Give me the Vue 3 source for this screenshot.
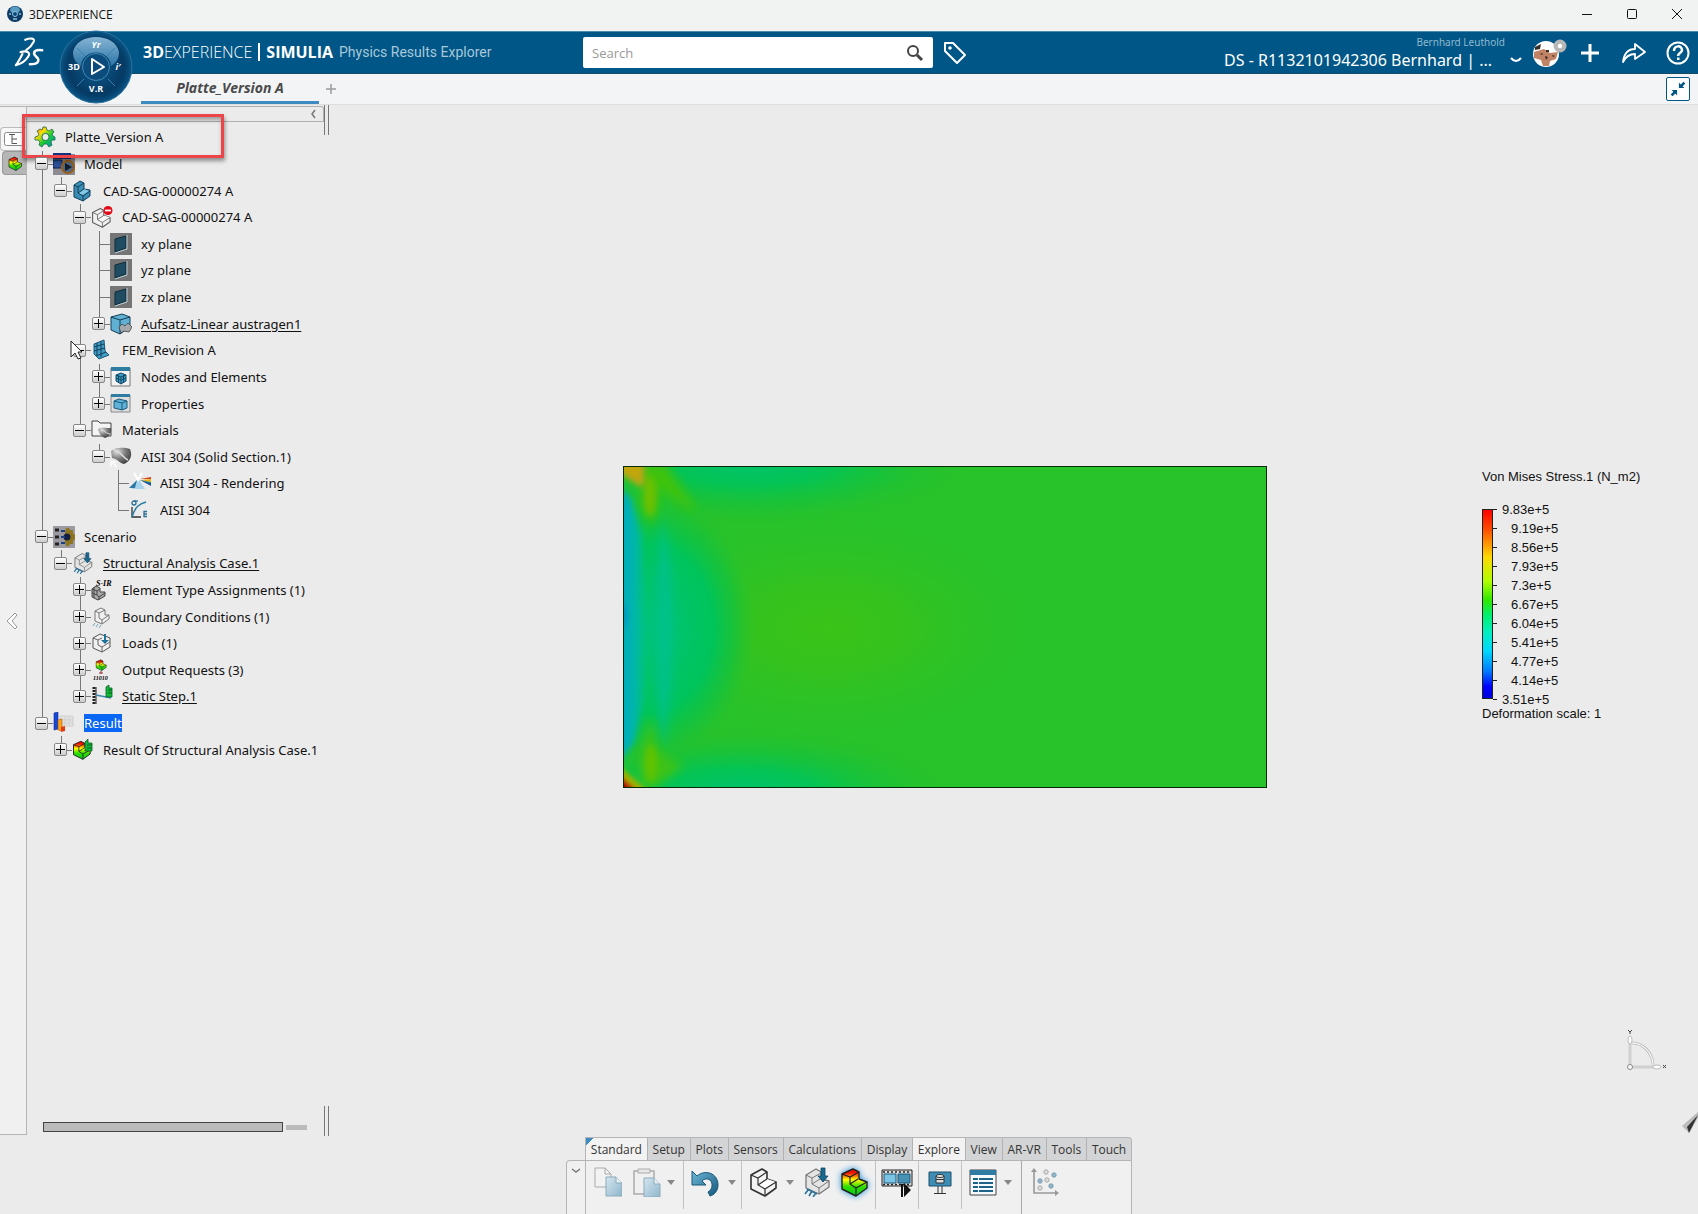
<script setup>
import { ref } from 'vue'

const search = ref('')

const source = [
  [0, 'Model', 'model', '-'],
  [1, 'CAD-SAG-00000274 A', 'product', '-'],
  [2, 'CAD-SAG-00000274 A', 'hidden-part', '-'],
  [3, 'xy plane', 'plane', ''],
  [3, 'yz plane', 'plane', ''],
  [3, 'zx plane', 'plane', ''],
  [3, 'Aufsatz-Linear austragen1', 'body', '+', 'link'],
  [2, 'FEM_Revision A', 'fem', '-'],
  [3, 'Nodes and Elements', 'nodes', '+'],
  [3, 'Properties', 'props', '+'],
  [2, 'Materials', 'materials', '-'],
  [3, 'AISI 304 (Solid Section.1)', 'material', '-'],
  [4, 'AISI 304 - Rendering', 'rendering', ''],
  [4, 'AISI 304', 'curve', ''],
  [0, 'Scenario', 'scenario', '-'],
  [1, 'Structural Analysis Case.1', 'case', '-', 'link'],
  [2, 'Element Type Assignments (1)', 'element', '+'],
  [2, 'Boundary Conditions (1)', 'boundary', '+'],
  [2, 'Loads (1)', 'load', '+'],
  [2, 'Output Requests (3)', 'output', '+'],
  [2, 'Static Step.1', 'step', '+', 'link'],
  [0, 'Result', 'result', '-', 'selected'],
  [1, 'Result Of Structural Analysis Case.1', 'contour-ok', '+'],
]

// Small captions that are part of a tree icon.
const captions = {
  element: { text: 'S-IR', x: 5, y: 7, size: 8 },
  output: { text: '11010', x: 2, y: 21, size: 6 },
}

// A guide line runs on when a sibling at that depth still follows.
const continues = (index, depth) => {
  for (const [level] of source.slice(index + 1)) {
    if (level < depth) return false
    if (level === depth) return true
  }
  return false
}

const rows = source.map(([level, label, icon, toggle, kind], i) => ({
  label, icon, toggle, kind,
  caption: captions[icon],
  guides: Array.from({ length: level }, (_, d) => continues(i, d)),
  last: !continues(i, level),
}))

const legend = ['9.83e+5', '9.19e+5', '8.56e+5', '7.93e+5', '7.3e+5', '6.67e+5', '6.04e+5', '5.41e+5', '4.77e+5', '4.14e+5', '3.51e+5']

const tabs = ['Standard', 'Setup', 'Plots', 'Sensors', 'Calculations', 'Display', 'Explore', 'View', 'AR-VR', 'Tools', 'Touch']
</script>

<template>
  <div class="app">
    <svg class="sprite" width="0" height="0" aria-hidden="true">
      <defs>
        <linearGradient id="rainbow" x1="0" y1="0" x2="0" y2="1">
          <stop offset="0" stop-color="#f00" /><stop offset=".15" stop-color="#f21500" /><stop offset=".4" stop-color="#ff0" />
          <stop offset=".65" stop-color="#3d0" /><stop offset="1" stop-color="#0c2" />
        </linearGradient>
        <linearGradient id="paper" x1="0" y1="0" x2="1" y2="1">
          <stop offset="0" stop-color="#d5e6ef" /><stop offset="1" stop-color="#8fb6cc" />
        </linearGradient>
        <linearGradient id="steel" x1="0" y1="0" x2="1" y2="1">
          <stop offset="0" stop-color="#6fb7d8" /><stop offset="1" stop-color="#12587e" />
        </linearGradient>
        <linearGradient id="gearfill" x1="0" y1="0" x2="1" y2="1">
          <stop offset="0" stop-color="#f60" /><stop offset=".3" stop-color="#fd0" /><stop offset=".6" stop-color="#1c3" /><stop offset="1" stop-color="#08c" />
        </linearGradient>
        <radialGradient id="metal" cx=".3" cy=".25" r=".9">
          <stop offset="0" stop-color="#ddd" /><stop offset=".5" stop-color="#777" /><stop offset="1" stop-color="#333" />
        </radialGradient>
      </defs>
      <symbol id="part-shape" viewBox="0 0 28 30">
        <path d="M2 8L13 2L18 5V12L27 15V21L16 29L2 22Z" fill="#f4f4f4" stroke="#333" stroke-linejoin="round" stroke-width="1.6" />
        <path d="M9 19L18 12L27 15L16 22Z" fill="#fff" />
        <path d="M2 8L9 11L18 5M9 11V18L16 22L27 15M16 22V29M9 18L18 12" fill="none" stroke="#333" stroke-width="1.2" />
      </symbol>
      <symbol id="contour-shape" viewBox="0 0 28 30">
        <path d="M2 7L13 2L19 5V12L27 15V21L16 29L2 22Z" fill="url(#rainbow)" stroke="#222" stroke-width="1.4" stroke-linejoin="round" />
        <path d="M2 7L10 10L19 5M10 10V17L16 21L27 15M16 21V29M10 17L18 12" fill="none" stroke="#222" stroke-width="1.2" />
      </symbol>
      <symbol id="gear" viewBox="0 0 22 22">
        <path d="M9 1H12L13 4L15 5L18 3L20 6L18 8L19 10L21 11V14L18 14L17 16L18 19L15 21L13 18H10L8 21L5 19L6 16L4 14H1V11L4 10L5 8L3 5L6 3L8 4Z" fill="url(#gearfill)" stroke="#265" stroke-width=".8" />
        <circle cx="11.500" cy="11" r="3.600" fill="#ebebeb" stroke="#275" />
      </symbol>
      <symbol id="model" viewBox="0 0 22 22">
        <path d="M0 1H22V22H0Z" fill="#8b8b91" /><path d="M0 0H18V6H0Z" fill="#16327c" /><path d="M0 7H9V15H0Z" fill="#2c4f96" stroke="#0b1e4c" />
        <circle cx="15" cy="14" r="6.200" fill="#53667f" stroke="#9b6018" stroke-width="2" /><path d="M12 10L19 14L12 18Z" fill="#101b2d" />
      </symbol>
      <symbol id="product" viewBox="0 0 22 22">
        <path d="M2 5L8 1L12 3V9L18 10V16L11 21L2 17Z" fill="#3a8db5" stroke="#123f59" /><path d="M6 13L12 9L17 11L11 15Z" fill="#83c8e4" />
        <path d="M2 5L6 7L12 3M6 7V13L11 16L18 11M11 16V21M6 13L12 9" fill="none" stroke="#123f59" />
      </symbol>
      <symbol id="hidden-part" viewBox="0 0 22 22">
        <g opacity=".75"><use href="#part-shape" x="0" y="1" width="20" height="21" /></g><circle cx="17" cy="4.500" r="4.500" fill="#e00a18" /><path d="M14 4.500H20" stroke="#fff" stroke-width="1.800" />
      </symbol>
      <symbol id="plane" viewBox="0 0 22 22">
        <path d="M0 0H22V22H0Z" fill="#757575" /><path d="M5 6L16 3V15L5 19Z" fill="#1f4c61" stroke="#0e2b39" /><path d="M17 2V16L5 20" fill="none" stroke="#b9cdd6" />
      </symbol>
      <symbol id="body" viewBox="0 0 22 22">
        <path d="M1 4L12 1L20 4V14L10 21L1 17Z" fill="#5fb0d3" stroke="#123f59" /><path d="M1 4L10 7L20 4M10 7V21" fill="none" stroke="#123f59" />
        <path d="M9 14l3-3 3 2 3-3 4 4-3 5-5-1-3 2z" fill="#a3a9ad" stroke="#444" stroke-width=".8" />
      </symbol>
      <symbol id="fem" viewBox="0 0 22 22">
        <path d="M3 5L13 1L14 12L18 16L8 20L3 15Z" fill="#3f9cc4" stroke="#1b5878" /><path d="M6 4V16M10 2V18M3 8L13 5M3 12L14 9M5 17L15 13" stroke="#123f59" fill="none" />
      </symbol>
      <symbol id="nodes" viewBox="0 0 22 22">
        <path d="M1 2H20V20H1Z" fill="#f3f3f3" stroke="#777" /><path d="M1 1H20V5H1Z" fill="#2f7ca3" />
        <path d="M6 9L11 7L16 9V15L11 18L6 15Z" fill="#3d9cc6" stroke="#124761" /><path d="M6 12L11 14L16 12M6 9L11 11L16 9M11 11V18M8.500 9V17M13.500 9V17" fill="none" stroke="#124761" />
      </symbol>
      <symbol id="props" viewBox="0 0 22 22">
        <path d="M1 2H20V19H1Z" fill="#ddd" stroke="#888" /><path d="M1 1H20V4H1Z" fill="#2f7ca3" />
        <path d="M4 8L9 6L17 8V15L12 17L4 15Z" fill="#5fb2d6" stroke="#1b5c7e" /><path d="M4 8L12 10L17 8M12 10V17" fill="none" stroke="#1b5c7e" />
      </symbol>
      <symbol id="materials" viewBox="0 0 22 22">
        <path d="M1 17V2H7L9 4H20V17Z" fill="#f4f4f4" stroke="#444" /><path d="M7 10C10 8 16 9 20 9C21 14 18 18 14 19C9 17 8 13 7 10Z" fill="url(#metal)" /><path d="M8 9C12 9 13 14 19 15" stroke="#ddd" fill="none" />
      </symbol>
      <symbol id="material" viewBox="0 0 22 22">
        <path d="M1 5C5 1 14 1 20 3C23 10 20 15 14 18C9 17 8 13 2 12Z" fill="url(#metal)" /><path d="M3 4C10 4 12 11 18 14" stroke="#ddd" stroke-width="1.500" fill="none" />
        <path d="M1 21V16H6M2 16L7 21" fill="none" stroke="#fff" stroke-width="1.300" />
      </symbol>
      <symbol id="rendering" viewBox="0 0 22 22">
        <path d="M9 6L3 17H16Z" fill="#a9d5ec" /><path d="M8 8L0 16H6Z" fill="#2d79a5" /><path d="M5 1L9 8L13 1" fill="none" stroke="#fff" stroke-width="2" />
        <path d="M11 7L22 5V7Z" fill="#d6431d" /><path d="M11 8L22 7V10Z" fill="#ecb417" /><path d="M11 8L22 10V12Z" fill="#35a05b" /><path d="M11 8L22 11V14Z" fill="#1c52a8" />
      </symbol>
      <symbol id="curve" viewBox="0 0 22 22">
        <path d="M3 8V18H12" stroke="#333" fill="none" stroke-width="1.300" /><path d="M3 18C6 8 10 5 17 3" stroke="#2a7ba4" fill="none" stroke-width="1.500" />
        <circle cx="5" cy="4" r="2" fill="none" stroke="#2a6f95" stroke-width="1.300" /><path d="M5 2H9" stroke="#2a6f95" stroke-width="1.300" />
        <path d="M18 12.500h-3v5h3M15 15h3" fill="none" stroke="#2a6f95" stroke-width="1.300" />
      </symbol>
      <symbol id="scenario" viewBox="0 0 22 22">
        <path d="M0 0H22V22H0Z" fill="#9a9aa0" /><path d="M13 2h3l1 2 3 0 0 3 2 2v4l-2 2 0 3h-3l-1 2h-3l-1-4V6z" fill="#8d7420" /><circle cx="14" cy="11" r="3.500" fill="#14203f" />
        <path d="M2 4H6M2 11H6M2 18H6" stroke="#222" stroke-width="3" /><path d="M8 5H12M8 11H12M8 17H12" stroke="#1c3d8a" stroke-width="1.800" />
      </symbol>
      <symbol id="case" viewBox="0 0 28 30">
        <path d="M3 8L13 2L18 5V12L26 14V20L16 27L3 21Z" fill="#e4e4e4" stroke="#777" stroke-width="1.300" stroke-linejoin="round" /><path d="M3 8L9 11L18 6M9 11V17L16 21L26 14M16 21V27M9 17L17 12" fill="none" stroke="#777" />
        <path d="M18 1H22V9H25L20 15L15 9H18Z" fill="#17688f" stroke="#0d4664" stroke-width=".8" /><path d="M5 23L2 27M9 24L6 29M13 26L10 30M4 22L14 27" stroke="#2a7299" stroke-width="1.600" />
      </symbol>
      <symbol id="element" viewBox="0 0 22 22">
        <path d="M1 10L5 7L9 9V13L14 13V17L7 21L1 18Z" fill="#aaa" stroke="#444" /><path d="M1 10L6 12L9 10M6 12V16L8 18L14 14M8 18V21M3 8V19M1 14L6 16" fill="none" stroke="#444" />
      </symbol>
      <symbol id="boundary" viewBox="0 0 22 22">
        <path d="M4 5L10 2L14 4V9L18 9V13L11 18L4 15Z" fill="#f0f0f0" stroke="#777" /><path d="M4 5L8 7L14 4M8 7V12L11 14L18 9M11 14V18" fill="none" stroke="#777" /><path d="M4 17L2 20M7 18L5 21M10 19L8 22" stroke="#76a3bd" />
      </symbol>
      <symbol id="load" viewBox="0 0 22 22">
        <path d="M2 6L9 2L19 6V15L11 20L2 16Z" fill="#f0f0f0" stroke="#555" /><path d="M2 6L7 8L11 6M7 8V13L11 15L19 10M11 15V20" fill="none" stroke="#666" /><path d="M13 2H15V8H18L14 12L10 8H13Z" fill="#1d7299" />
      </symbol>
      <symbol id="output" viewBox="0 0 22 22">
        <use href="#contour-shape" x="4" y="0" width="12" height="12" /><path d="M10 12V15M8 14H12" stroke="#933" />
      </symbol>
      <symbol id="step" viewBox="0 0 22 22">
        <path d="M3 2V19" stroke="#222" stroke-width="3" stroke-dasharray="2 1" /><path d="M5 2V19" stroke="#222" /><path d="M5 10L20 13" stroke="#3a88ad" stroke-width="1.500" />
        <path d="M15 12V2L18 0V3H21V12Z" fill="#12b83c" stroke="#075d1c" stroke-width=".8" /><path d="M17 5H21M17 8H21" stroke="#075d1c" />
      </symbol>
      <symbol id="result" viewBox="0 0 22 22">
        <path d="M7 4H20V14H7Z" fill="#e2e2e2" stroke="#cfcfcf" /><path d="M7 8H20M7 11H20M12 4V14M16 4V14" stroke="#cfcfcf" />
        <path d="M1 1L5 0V17L1 18Z" fill="#1848d8" stroke="#0a2a94" stroke-width=".6" /><path d="M5 8L9 7V19L5 18Z" fill="#f6a21c" stroke="#b85a06" stroke-width=".6" /><path d="M8 15L12 14V19L8 20Z" fill="#e33a14" />
      </symbol>
      <symbol id="contour-ok" viewBox="0 0 22 22">
        <use href="#contour-shape" x="0" y="1" width="19" height="20" /><path d="M13 12V3L16 0V4H20V12Z" fill="#12b83c" stroke="#075d1c" stroke-width=".8" /><path d="M15 6H20M15 9H20" stroke="#075d1c" />
      </symbol>
    </svg>

    <div class="titlebar">
      <svg class="app-icon" viewBox="0 0 16 16"><circle cx="8" cy="8" r="8" fill="#0c3c66" /><ellipse cx="8" cy="4" rx="5" ry="3.500" fill="#5a9cc4" /><circle cx="8" cy="8" r="2.500" fill="#0d4a78" stroke="#8dc3e4" /><path d="M2 8H4M12 8H14M6 13H10" stroke="#dff" /></svg>
      <span class="app-name">3DEXPERIENCE</span>
      <div class="window-buttons">
        <button aria-label="Minimize"><svg viewBox="0 0 12 12"><path d="M1 6.500H11" /></svg></button>
        <button aria-label="Maximize"><svg viewBox="0 0 12 12"><rect x="1.500" y="1.500" width="9" height="9" rx="1" /></svg></button>
        <button aria-label="Close"><svg viewBox="0 0 12 12"><path d="M1 1L11 11M11 1L1 11" /></svg></button>
      </div>
    </div>

    <header class="topbar">
      <svg class="ds-logo" viewBox="0 0 32 34"><g fill="none" stroke="#fff" stroke-linecap="round" stroke-linejoin="round"><path d="M12 3C17 1 23 1 21 5C19 9 16 12 13 14" stroke-width="2.200" /><path d="M7 16C15 14 18 17 15 21C12 26 6 29 2 30C5 26 7 22 9 18" stroke-width="2.300" /><path d="M30 14C24 13 20 15 22 19C24 22 28 23 25 27C23 29 19 29 17 29" stroke-width="2.700" /></g></svg>
      <button class="compass" aria-label="Compass">
        <svg viewBox="0 0 74 74">
          <defs>
            <radialGradient id="dial"><stop offset="0" stop-color="#0d5c92" /><stop offset=".75" stop-color="#063a63" /><stop offset=".85" stop-color="#06426e" /><stop offset="1" stop-color="#0a5788" /></radialGradient>
            <linearGradient id="gloss" x1="0" y1="0" x2="0" y2="1"><stop offset="0" stop-color="#86b4d3" /><stop offset="1" stop-color="#2c76a8" /></linearGradient>
          </defs>
          <circle cx="37" cy="37" r="36" fill="url(#dial)" stroke="#2b709c" />
          <path d="M14 22C18 2 56 2 60 22C60 29 57 33 52 36C51 18 23 18 22 36C17 33 14 29 14 22Z" fill="url(#gloss)" />
          <circle cx="37" cy="37" r="13.500" fill="#0c4c7c" stroke="#4389b5" />
          <path d="M18 18L26 26M56 18L48 26M18 56L25 49M56 56L49 49" stroke="#3a80ad" />
          <path d="M33 29L45 37L33 44Z" fill="none" stroke="#fff" stroke-width="2" stroke-linejoin="round" />
          <g fill="#fff" font-family="Open Sans, sans-serif" font-weight="700" font-size="9" text-anchor="middle"><text x="37" y="18" font-style="italic">Yr</text><text x="15" y="40">3D</text><text x="59" y="40" font-style="italic">i′</text><text x="37" y="62">V.R</text></g>
        </svg>
      </button>
      <h1 class="brand"><b>3D</b><span>EXPERIENCE</span><i></i><b>SIMULIA</b><em>Physics Results Explorer</em></h1>
      <form class="search" @submit.prevent>
        <input v-model="search" type="text" placeholder="Search" aria-label="Search">
        <button aria-label="Start search"><svg viewBox="0 0 18 18"><circle cx="7" cy="7" r="5" /><path d="M11 11L16 16" stroke-width="3" /></svg></button>
      </form>
      <button class="tag" aria-label="Tags"><svg viewBox="0 0 24 24"><path d="M2 2H10L22 14L14 22L2 10Z" fill="none" stroke="#fff" stroke-width="2" stroke-linejoin="round" /><circle cx="7" cy="7" r="1.800" fill="#fff" /></svg></button>
      <div class="account">
        <div class="who"><small>Bernhard Leuthold</small><span>DS - R1132101942306 Bernhard | ...</span></div>
        <button class="drop" aria-label="Change context"><svg viewBox="0 0 12 6"><path d="M1 1Q6 7 11 1" fill="none" stroke="#fff" stroke-width="2" /></svg></button>
        <button class="avatar" aria-label="Profile">
          <svg viewBox="0 0 36 30"><circle cx="14" cy="16" r="13" fill="#fff" /><path d="M2 14L12 11L18 15L26 14L24 21L18 23L17 28H11L9 22L2 20Z" fill="#c08366" /><path d="M3 9L9 6L8 11L3 12ZM14 12h3v2h-3zM8 16l2-1 1 2zM13 18l3 1-2 3zM20 17l3 1-2 1z" fill="#3a2a24" /><circle cx="28" cy="8" r="6.500" fill="#b7b7b7" /><circle cx="28" cy="8" r="2.200" fill="#fff" /></svg>
        </button>
        <button class="tool" aria-label="Add"><svg viewBox="0 0 24 24"><path d="M12 3V21M3 12H21" fill="none" stroke="#fff" stroke-width="3" /></svg></button>
        <button class="tool" aria-label="Share"><svg viewBox="0 0 24 24"><path d="M1 21C2 13 6 8 13 8V3L23 11L13 18V13C8 13 4 15 1 21Z" fill="none" stroke="#fff" stroke-width="1.800" stroke-linejoin="round" /></svg></button>
        <button class="tool" aria-label="Help"><svg viewBox="0 0 24 24"><circle cx="12" cy="12" r="10.500" fill="none" stroke="#fff" stroke-width="2" /><path d="M8 10C8 4 16 4 16 9C16 12 12 12 12 15" fill="none" stroke="#fff" stroke-width="2.500" /><path d="M11 16.500H13.500V19H11Z" fill="#fff" /></svg></button>
      </div>
    </header>

    <nav class="tabstrip">
      <a href="#" class="doc-tab">Platte_Version A</a>
      <button class="new-tab" aria-label="New tab"><svg viewBox="0 0 12 12"><path d="M6 1V11M1 6H11" stroke="#999" stroke-width="1.500" /></svg></button>
      <button class="shrink" aria-label="Exit full view"><svg viewBox="0 0 24 24"><path d="M13 11V5L15 7L18 4L20 6L17 9L19 11Z M11 13V19L9 17L6 20L4 18L7 15L5 13Z" fill="#005686" /></svg></button>
    </nav>

    <main class="work">
      <aside class="rail">
        <button class="rail-tab open" aria-label="Tree"><svg viewBox="0 0 20 16"><rect x=".5" y="1.500" width="19" height="13" rx="2" fill="#fff" stroke="#888" /><path d="M5 3.500H11M8 3.500V12.500H13M8 8H13" fill="none" stroke="#555" /></svg></button>
        <button class="rail-tab" aria-label="Results"><svg viewBox="0 0 28 30"><use href="#contour-shape" /></svg></button>
        <button class="rail-fold" aria-label="Collapse"><svg viewBox="0 0 12 18"><path d="M9 1L1 9L9 17L11 15L6 9L11 3Z" fill="#fff" stroke="#999" /></svg></button>
      </aside>

      <section class="panel">
        <div class="panel-head"><button aria-label="Hide panel"><svg viewBox="0 0 6 10"><path d="M5 1L2 5L5 9" fill="none" stroke="#777" stroke-width="1.500" /></svg></button></div>
        <ul class="tree">
          <li class="row root"><svg class="icon"><use href="#gear" /></svg><span class="label">Platte_Version A</span></li>
          <li v-for="(row, i) in rows" :key="i" class="row">
            <span v-for="(on, d) in row.guides" :key="d" class="cell" :class="{ guide: on }"></span>
            <span class="cell own" :class="{ last: row.last }"><button v-if="row.toggle" class="toggle" :class="{ plus: row.toggle === '+' }" :aria-label="'Toggle ' + row.label"></button></span>
            <svg class="icon"><use :href="'#' + row.icon" /><text v-if="row.caption" class="caption" :x="row.caption.x" :y="row.caption.y" :font-size="row.caption.size">{{ row.caption.text }}</text></svg>
            <span class="label" :class="row.kind">{{ row.label }}</span>
          </li>
        </ul>
        <div class="callout"></div>
        <svg class="cursor" viewBox="0 0 13 20"><path d="M1 1V17L5 13L8 19L11 18L8 12H12Z" fill="#fff" stroke="#222" /></svg>
        <div class="scroll"><div class="thumb"></div><div class="stub"></div></div>
      </section>
      <div class="splitter"><i></i><i></i></div>

      <section class="viewport">
        <svg class="plot" viewBox="0 0 644 322" preserveAspectRatio="none">
          <defs>
            <radialGradient id="warm"><stop offset="0" stop-color="#3ac318" /><stop offset=".35" stop-color="#35c21e" /><stop offset="1" stop-color="#28c22a" stop-opacity="0" /></radialGradient>
            <radialGradient id="cool"><stop offset="0" stop-color="#00c36c" /><stop offset=".35" stop-color="#00c45a" stop-opacity=".9" /><stop offset=".65" stop-color="#14c23e" stop-opacity=".6" /><stop offset="1" stop-color="#28c22a" stop-opacity="0" /></radialGradient>
            <radialGradient id="lobe"><stop offset="0" stop-color="#00c37c" /><stop offset=".6" stop-color="#00c45a" /><stop offset=".8" stop-color="#12c240" stop-opacity=".7" /><stop offset="1" stop-color="#28c22a" stop-opacity="0" /></radialGradient>
            <linearGradient id="edge" x1="0" y1="0" x2="1" y2="0"><stop offset="0" stop-color="#00a4c6" /><stop offset=".6" stop-color="#00b2b4" /><stop offset="1" stop-color="#00c284" /></linearGradient>
            <filter id="faint" x="-50%" y="-50%" width="200%" height="200%"><feGaussianBlur stdDeviation="2" /></filter>
            <filter id="soft" x="-50%" y="-50%" width="200%" height="200%"><feGaussianBlur stdDeviation="3" /></filter>
            <filter id="softer" x="-50%" y="-50%" width="200%" height="200%"><feGaussianBlur stdDeviation="5" /></filter>
            <clipPath id="sheet"><rect width="644" height="322" /></clipPath>
          </defs>
          <g clip-path="url(#sheet)">
            <rect width="644" height="322" fill="#28c22a" />
            <ellipse cx="205" cy="162" rx="220" ry="120" fill="url(#warm)" />
            <ellipse cx="125" cy="-4" rx="230" ry="66" fill="url(#cool)" />
            <ellipse cx="115" cy="326" rx="220" ry="66" fill="url(#cool)" />
            <ellipse cx="26" cy="162" rx="108" ry="142" fill="url(#lobe)" />
            <path d="M40 50L48 110L50 162L48 220L40 285L34 220L34 110Z" fill="#00c189" filter="url(#softer)" />
            <path d="M-12 14L8 32L19 70L21 160L20 235L12 275L-12 308Z" fill="url(#edge)" filter="url(#soft)" />
            <path d="M20 -4H42L74 44L60 40L36 24L30 60L24 50L20 30Z" fill="#3cc210" filter="url(#softer)" />
            <ellipse cx="27" cy="30" rx="6" ry="20" fill="#70c000" filter="url(#soft)" />
            <path d="M-8 -8H22L21 21L14 19L-8 4Z" fill="#c2a60a" filter="url(#soft)" />
            <path d="M28 250L34 285L60 300L30 322H18L18 290Z" fill="#3cc214" filter="url(#softer)" />
            <ellipse cx="28" cy="297" rx="6" ry="18" fill="#62c200" filter="url(#soft)" />
            <path d="M-6 298L26 326H-6Z" fill="#9cb400" filter="url(#faint)" />
            <path d="M-6 306L16 326H-6Z" fill="#b86a00" filter="url(#faint)" />
            <path d="M-6 310L11 326H-6Z" fill="#a80000" filter="url(#faint)" />
            <ellipse cx="0" cy="150" rx="3" ry="12" fill="#0090c4" filter="url(#soft)" />
          </g>
          <rect x=".5" y=".5" width="643" height="321" fill="none" stroke="#062a06" />
        </svg>
        <div class="legend">
          <p>Von Mises Stress.1 (N_m2)</p>
          <div class="scale"><div class="bar"></div><ol><li v-for="v in legend" :key="v">{{ v }}</li></ol></div>
          <p class="foot">Deformation scale: 1</p>
        </div>
        <svg class="triad" viewBox="0 0 44 44"><path d="M8 10V38H34" fill="none" stroke="#d0d0d0" stroke-width="3" /><path d="M10 14C22 14 31 25 31 36" fill="none" stroke="#c4c4c4" stroke-width="3" /><path d="M10 14C22 14 31 25 31 36" fill="none" stroke="#fff" /><ellipse cx="8" cy="11" rx="2" ry="4" fill="#fff" stroke="#bbb" /><ellipse cx="35" cy="38" rx="4" ry="2" fill="#fff" stroke="#bbb" /><circle cx="8" cy="38" r="2.500" fill="#fff" stroke="#888" /><path d="M6 1L8 3L10 1M8 3V5M41 36l3 3M44 36l-3 3" fill="none" stroke="#444" /></svg>
        <svg class="corner" viewBox="0 0 17 22"><path d="M17 0V6L8 21L1 14Z" fill="#bbb" /><path d="M17 3L8 21L6 15Z" fill="#333" /></svg>
      </section>
    </main>

    <footer class="actionbar">
      <div class="action-tabs"><button v-for="t in tabs" :key="t" :class="{ active: t === 'Standard' || t === 'Explore', first: t === 'Standard' }">{{ t }}</button></div>
      <div class="actions">
        <button class="fold" aria-label="Collapse bar"><svg viewBox="0 0 10 6"><path d="M1 1L5 4L9 1" fill="none" stroke="#777" stroke-width="1.500" /></svg></button>
        <div class="group g-clip">
          <button class="act" aria-label="Copy"><svg viewBox="0 0 28 30"><path d="M1 1H11L17 7V20H1Z" fill="#f2f2f2" stroke="#aaa" /><path d="M11 1V7H17" fill="none" stroke="#aaa" /><path d="M12 10H22L28 16V29H12Z" fill="url(#paper)" stroke="#8dabbb" /><path d="M22 10V16H28" fill="#e8f1f6" stroke="#8dabbb" /></svg></button>
          <button class="act" aria-label="Paste"><svg viewBox="0 0 28 30"><path d="M1 4H21V27H1Z" fill="#f0f0f0" stroke="#aaa" stroke-width="1.500" /><path d="M5 2H17V6H5Z" fill="#e8e8e8" stroke="#aaa" /><path d="M11 11H21L27 17V30H11Z" fill="url(#paper)" stroke="#8dabbb" /><path d="M21 11V17H27" fill="#e8f1f6" stroke="#8dabbb" /></svg></button>
          <button class="caret" aria-label="Paste options"></button>
        </div>
        <div class="group g-undo">
          <button class="act" aria-label="Undo"><svg viewBox="0 0 28 30"><path d="M1 4L6 9C14 2 27 6 27 18C27 24 23 28 19 29L17 25C22 22 22 16 19 13C16 11 13 12 11 14L15 18H1Z" fill="url(#steel)" stroke="#1a5878" /></svg></button>
          <button class="caret" aria-label="Undo options"></button>
        </div>
        <div class="group g-part">
          <button class="act" aria-label="Part"><svg><use href="#part-shape" /></svg></button>
          <button class="caret" aria-label="Part options"></button>
          <button class="act" aria-label="Analysis case"><svg><use href="#case" /></svg></button>
          <button class="act glow" aria-label="Results"><svg><use href="#contour-shape" /></svg></button>
        </div>
        <div class="group g-film">
          <button class="act wide" aria-label="Play animation"><svg viewBox="0 0 32 30"><path d="M1 3H31V19H1Z" fill="#ddd" stroke="#222" /><path d="M2 5H30M2 17.500H30" stroke="#222" stroke-dasharray="2 2" stroke-width="1.500" /><path d="M3 7H15V16H3Z" fill="#7cc4e4" stroke="#1b5878" /><path d="M17 7H29V16H17Z" fill="#4791b5" stroke="#1b5878" /><path d="M20 17H22V30H20ZM23 16L30 23L23 30Z" fill="#111" /></svg></button>
        </div>
        <div class="group g-show">
          <button class="act" aria-label="Present"><svg viewBox="0 0 28 30"><path d="M3 5H25V19H3Z" fill="#3d8db5" stroke="#1b4f6b" /><path d="M10 9H18V16H10Z" fill="#ddd" stroke="#333" /><ellipse cx="14" cy="9" rx="4" ry="1.500" fill="#eee" stroke="#333" /><path d="M10 12.500H18M12 19V26M16 19V26M8 26.500H20" stroke="#333" fill="none" /></svg></button>
        </div>
        <div class="group g-table">
          <button class="act" aria-label="Table"><svg viewBox="0 0 28 30"><path d="M1 3H27V28H1Z" fill="#f6fafc" stroke="#444" /><path d="M1 3H27V8H1Z" fill="#2f7ba3" /><path d="M4 12H24M4 16H24M4 20H24M4 24H24" stroke="#1d6389" stroke-width="2" stroke-dasharray="5 1 14 0" /></svg></button>
          <button class="caret" aria-label="Table options"></button>
        </div>
        <div class="group g-chart">
          <button class="act" aria-label="Scatter chart"><svg viewBox="0 0 28 30"><path d="M3 4V26H26" fill="none" stroke="#999" stroke-width="1.600" /><path d="M0 5L3 1L6 5ZM24 23L28 26L24 29Z" fill="#999" /><g fill="#ddd" stroke="#aaa"><circle cx="15" cy="5" r="2.200" /><circle cx="16" cy="13" r="2.200" /><circle cx="9" cy="21" r="2.200" /></g><g fill="#8fb6cc" stroke="#7f9fb0"><circle cx="23" cy="8" r="2.200" /><circle cx="9" cy="14" r="2.200" /><circle cx="20" cy="19" r="2.200" /></g></svg></button>
        </div>
      </div>
    </footer>
  </div>
</template>

<style>
body { margin: 0; background: #ebebeb; }
</style>

<style scoped>
.app { min-height: 100vh; display: flex; flex-direction: column; background: #ebebeb; font-family: "Noto Sans", sans-serif; font-size: 12px; color: #111; box-sizing: border-box; }
.app * { box-sizing: border-box; }
.sprite { position: absolute; }
button { border: 0; padding: 0; background: none; font: inherit; color: inherit; display: flex; align-items: center; justify-content: center; flex: none; }
svg { display: block; flex: none; }

.titlebar { height: 31px; background: #f1f3f3; display: flex; align-items: center; padding: 0 15px 3px 7px; gap: 6px; }
.app-icon { width: 16px; height: 16px; }
.app-name { flex: 1; font-size: 12px; font-family: "Open Sans", sans-serif; }
.window-buttons { display: flex; gap: 33px; }
.window-buttons svg { width: 12px; height: 12px; fill: none; stroke: #111; }

.topbar { height: 43px; background: #005686; border-top: 1px solid #4d8bab; border-bottom: 1px solid #174a66; display: flex; align-items: center; padding-right: 8px; color: #fff; position: relative; }
.ds-logo { width: 32px; height: 32px; margin-left: 13px; }
.compass { width: 74px; height: 42px; margin-left: 14px; align-items: flex-start; position: relative; z-index: 2; }
.compass svg { width: 74px; height: 74px; margin-top: -2px; }
.brand { margin: 0 0 2px 10px; width: 440px; font-size: 16px; font-weight: 400; display: flex; align-items: center; white-space: nowrap; line-height: 20px; font-family: "Open Sans", sans-serif; }
.brand span { font-weight: 300; }
.brand i { width: 2px; height: 18px; background: #fff; margin: 0 6px; }
.brand em { font-style: normal; font-size: 14px; font-family: Roboto, sans-serif; color: #a9c8da; margin-left: 6px; }
.search { flex: 0 1 350px; display: flex; background: #fff; height: 31px; border-radius: 2px; padding-right: 9px; }
.search input { flex: 1; min-width: 0; border: 0; outline: 0; background: none; padding: 0 9px; font: 13px "Open Sans", sans-serif; }
.search input::placeholder { color: #999; opacity: 1; }
.search svg { width: 18px; height: 18px; fill: none; stroke: #444; stroke-width: 2; }
.tag { margin-left: 10px; }
.tag svg { width: 24px; height: 24px; }
.account { margin-left: auto; display: flex; align-items: center; }
.who { display: flex; flex-direction: column; text-align: right; }
.who small { font-size: 10px; line-height: 14px; color: #8fb9d0; }
.who span { font-size: 16px; line-height: 22px; padding-right: 13px; }
.drop { margin: 15px 10px 0 5px; }
.drop svg { width: 12px; height: 6px; }
.avatar svg { width: 36px; height: 30px; }
.tool { margin: 0 4px; width: 36px; }
.tool svg { width: 24px; height: 24px; }
.tool:last-child { width: 24px; margin: 0 0 0 10px; }

.tabstrip { height: 31px; background: #f2f4f6; border-bottom: 1px solid #dcdfe2; display: flex; align-items: center; padding: 0 8px 0 141px; }
.doc-tab { width: 178px; height: 30px; border-bottom: 3px solid #3d8bc0; text-align: center; line-height: 28px; font-size: 14px; font-weight: 700; font-style: italic; color: #4a4a4a; text-decoration: none; font-family: "Open Sans", sans-serif; }
.new-tab { margin-left: 6px; }
.new-tab svg { width: 12px; height: 12px; }
.shrink { margin-left: auto; width: 24px; height: 24px; border: 1px solid #005686; border-radius: 2px; background: #fff; }
.shrink svg { width: 22px; height: 22px; }

.work { flex: 1; display: flex; min-height: 0; }
.rail { width: 27px; flex: none; margin: 1px 0 2px; padding-top: 20px; background: #f0f0f0; border: 1px solid #b5b5b5; border-left: 0; position: relative; }
.rail-tab { width: 24px; height: 24px; margin-left: 2px; background: #b6b6b6; border: 1px solid #999; border-right: 0; border-radius: 4px 0 0 4px; }
.rail-tab.open { width: 26px; margin-left: 0; background: #f6f6f6; border-color: #bbb; }
.rail-tab svg { width: 14px; height: 15px; }
.rail-tab.open svg { width: 20px; height: 16px; }
.rail-fold { position: absolute; left: 6px; top: 50%; transform: translateY(-50%); }
.rail-fold svg { width: 12px; height: 18px; }

.panel { width: 297px; flex: none; display: flex; flex-direction: column; position: relative; margin-top: 1px; }
.panel-head { height: 16px; border: 1px solid #b0b0b0; border-left: 0; border-radius: 0 3px 0 0; display: flex; justify-content: flex-end; align-items: center; padding-right: 7px; }
.panel-head svg { width: 6px; height: 10px; }
.tree { list-style: none; margin: 2px 0 0; padding: 0 0 0 5px; height: 639px; display: flex; flex-direction: column; font: 13px/18px "Noto Sans", sans-serif; }
.row { flex: 1; display: flex; align-items: center; white-space: nowrap; min-height: 0; }
.cell { width: 19px; align-self: stretch; position: relative; display: flex; align-items: center; }
.cell.guide::before, .cell.own::before { content: ""; position: absolute; left: 10px; top: 0; bottom: 0; width: 1px; background: #777; }
.cell.own.last::before { bottom: 50%; }
.cell.own::after { content: ""; position: absolute; left: 10px; right: -2px; top: 50%; height: 1px; background: #777; }
.toggle { width: 13px; height: 13px; margin-left: 3px; position: relative; z-index: 1; border: 1px solid #888; border-radius: 2px; background: linear-gradient(#fff, #ccc); }
.toggle::before, .toggle.plus::after { content: ""; position: absolute; left: 1px; right: 1px; top: 5px; height: 1px; background: #000; }
.toggle.plus::after { left: 5px; right: auto; top: 1px; width: 1px; height: 9px; }
.icon { width: 22px; height: 22px; margin: 0 9px 0 2px; overflow: visible; }
.caption { font-family: "Liberation Serif", serif; font-style: italic; font-weight: 700; }
.label { color: #111; }
.label.link { text-decoration: underline; text-underline-offset: 2px; }
.label.selected { background: #0a66f5; color: #fff; }
.callout { position: absolute; left: -5px; top: 8px; width: 202px; height: 44px; border: 3px solid #ec4448; box-shadow: 1px 3px 4px #0006, inset 1px 3px 4px #0005; pointer-events: none; }
.cursor { position: absolute; left: 43px; top: 234px; width: 13px; height: 20px; z-index: 2; }
.scroll { margin: auto 0 5px 16px; display: flex; align-items: center; gap: 3px; }
.thumb { width: 240px; height: 10px; background: #bababa; border: 1px solid #444; }
.stub { width: 21px; height: 5px; background: #bbb; }
.splitter { width: 5px; flex: none; display: flex; flex-direction: column; justify-content: space-between; padding-bottom: 1px; }
.splitter i { height: 30px; border: solid #777; border-width: 0 1px; }

.viewport { flex: 1; position: relative; display: grid; grid-template-columns: minmax(0, 294fr) minmax(0, 644fr) minmax(0, 215fr) 216px; align-content: center; align-items: start; padding-top: 11px; }
.plot { grid-column: 2; width: 100%; height: auto; }
.legend { grid-column: 4; font: 13px/18px "Liberation Sans", Arial, sans-serif; color: #111; }
.legend p { margin: 2px 0 0; }
.scale { display: flex; margin-top: 14px; }
.bar { width: 11px; height: 190px; margin-top: 9px; border: 1px solid #222; background: linear-gradient(#f00, #ff4a00 10%, #ffd800 25%, #b0ff00 38%, #30e800 48%, #00f070 56%, #00f0c0 65%, #00d8ff 75%, #0078ff 86%, #00f 94%, #00d); }
.scale ol { list-style: none; margin: 0; padding: 0; }
.scale li { height: 19px; line-height: 19px; padding-left: 18px; position: relative; }
.scale li:first-child, .scale li:last-child { padding-left: 9px; }
.scale li::before { content: ""; position: absolute; left: 0; top: 9px; width: 4px; height: 1px; background: #222; }
.legend .foot { margin: -4px 0 0; }
.triad { position: absolute; right: 32px; bottom: 64px; width: 44px; height: 44px; }
.corner { position: absolute; right: 0; bottom: 3px; width: 17px; height: 22px; }

.actionbar { align-self: center; width: 566px; height: 77px; display: flex; flex-direction: column; font-family: "Open Sans", sans-serif; }
.action-tabs { display: flex; height: 23px; margin-left: 19px; border: 1px solid #b5b5b5; border-bottom: 0; border-radius: 0 4px 0 0; background: #d3d4d5; }
.action-tabs button { flex: 1 0 auto; border-right: 1px solid #b2b2b2; font-size: 12px; color: #333; }
.action-tabs button:last-child { border-right: 0; }
.action-tabs .active { background: #f2f2f2; }
.action-tabs .first { background: linear-gradient(135deg, #3d8bc0 5px, #f2f2f2 5px); }
.actions { flex: 1; display: flex; border: 1px solid #b5b5b5; border-bottom: 0; border-radius: 4px 0 0 0; background: #f0f0f0; }
.fold { width: 19px; border-right: 1px solid #b5b5b5; align-items: flex-start; padding-top: 7px; }
.fold svg { width: 10px; height: 6px; }
.group { display: flex; align-items: flex-start; padding-top: 6px; border-right: 1px solid #c2c2c2; margin-bottom: 5px; }
.g-clip { width: 98px; padding-left: 8px; gap: 11px; }
.g-clip .caret { margin-left: -5px; }
.g-undo { width: 58px; padding-left: 7px; gap: 9px; }
.g-part { width: 134px; padding-left: 7px; gap: 9px; }
.g-film { width: 43px; padding-left: 5px; }
.g-show { width: 43px; padding-left: 7px; }
.g-table { width: 60px; padding-left: 7px; gap: 7px; border-color: #aaa; margin-bottom: 0; }
.g-chart { padding-left: 9px; border: 0; }
.act svg { width: 28px; height: 30px; }
.act.wide svg { width: 32px; height: 30px; }
.glow svg { filter: drop-shadow(0 0 3px #1d8fd8); }
.caret { width: 8px; height: 30px; }
.caret::before { content: ""; border: 4px solid transparent; border-top: 5px solid #888; border-bottom: 0; }
</style>
